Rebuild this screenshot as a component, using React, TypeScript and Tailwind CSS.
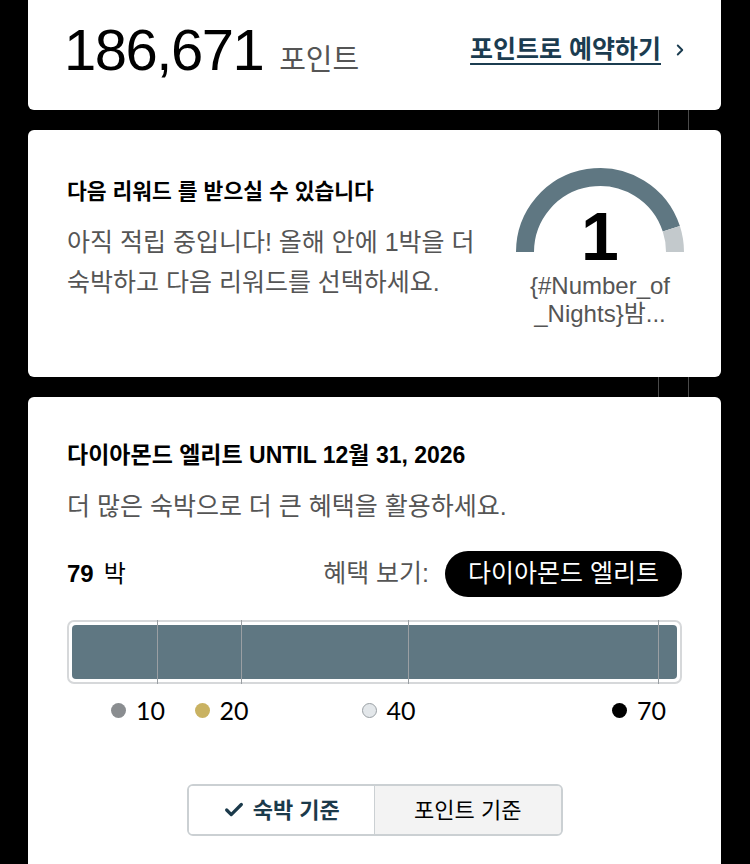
import { Check, ChevronRight } from "lucide-react";

const KR = "font-['Liberation_Sans','Noto_Sans_CJK_KR',sans-serif]";

const TICKS = [
  { value: 10, dot: "bg-[#8a8d90]" },
  { value: 20, dot: "bg-[#c9b262]" },
  { value: 40, dot: "bg-[#e3e7ea] border border-[#9aa0a4]" },
  { value: 70, dot: "bg-black" },
];

// px position of a nights value inside the bar container
const tickX = (v: number) => 6.5 + v * 8.35;

function GapLines() {
  return (
    <div className="flex h-[20px] pl-[630px] gap-[29px]">
      <div className="w-px bg-[#4a4a4a]" />
      <div className="w-px bg-[#4a4a4a]" />
    </div>
  );
}

function PointsCard() {
  return (
    <div className="flex h-[110px] items-center justify-between rounded-b-md bg-white pb-[10px] pl-[36px] pr-[32px]">
      <div className="flex items-baseline gap-[16px]">
        <span className="text-[58px] leading-none tracking-[-1.5px] text-black">
          186,671
        </span>
        <span className="text-[29px] leading-none text-[#555]">포인트</span>
      </div>
      <div className="flex items-center gap-[10px] text-[#1b3c50]">
        <span className="text-[25px] font-semibold underline underline-offset-[5px] decoration-[1.5px]">
          포인트로 예약하기
        </span>
        <ChevronRight className="h-[18px] w-[18px]" strokeWidth={2.5} />
      </div>
    </div>
  );
}

function Gauge() {
  const a = (18 * Math.PI) / 180;
  const ex = 90 + 75 * Math.cos(a);
  const ey = 86 - 75 * Math.sin(a);
  return (
    <div className="flex w-[180px] flex-col items-center pt-[36px]">
      <div className="relative h-[95px] w-[180px]">
        <svg width="180" height="95" viewBox="0 0 180 95">
          <path
            d={`M 15 86 A 75 75 0 0 1 ${ex} ${ey}`}
            fill="none"
            stroke="#5f7782"
            strokeWidth="18"
          />
          <path
            d={`M ${ex} ${ey} A 75 75 0 0 1 165 86`}
            fill="none"
            stroke="#c3c9cc"
            strokeWidth="18"
          />
        </svg>
        <span className="absolute left-0 right-0 top-[36px] text-center text-[68px] font-bold leading-none text-black">
          1
        </span>
      </div>
      <div className="mt-[11px] whitespace-nowrap text-center text-[24px] leading-[28px] text-[#555]">
        {"{#Number_of"}
        <br />
        {"_Nights}밤..."}
      </div>
    </div>
  );
}

function RewardCard() {
  return (
    <div className="flex h-[247px] justify-between rounded-md bg-white pl-[39px] pr-[31px]">
      <div className="pt-[48px]">
        <h2 className="text-[21.5px] font-bold leading-[28px] text-black">
          다음 리워드 를 받으실 수 있습니다
        </h2>
        <p className="mt-[16px] whitespace-nowrap text-[25px] leading-[40px] text-[#555]">
          아직 적립 중입니다! 올해 안에 1박을 더
          <br />
          숙박하고 다음 리워드를 선택하세요.
        </p>
      </div>
      <Gauge />
    </div>
  );
}

function StatusCard() {
  return (
    <div className="rounded-t-md bg-white pb-[40px] pl-[39px] pr-[39px] pt-[44px]">
      <h2 className="text-[23px] font-bold leading-[28px] text-black">
        다이아몬드 엘리트 UNTIL 12월 31, 2026
      </h2>
      <p className="mt-[21px] text-[25px] leading-[32px] text-[#555]">
        더 많은 숙박으로 더 큰 혜택을 활용하세요.
      </p>

      <div className="mt-[29px] flex h-[46px] items-center justify-between">
        <div className="flex items-baseline gap-[10px] text-[24px] text-black">
          <span className="font-bold">79</span>
          <span>박</span>
        </div>
        <div className="flex items-center gap-[16px]">
          <span className="text-[25px] text-[#555]">혜택 보기:</span>
          <span className="flex h-[46px] items-center rounded-full bg-black px-[23px] text-[25px] text-white">
            다이아몬드 엘리트
          </span>
        </div>
      </div>

      <div className="relative mt-[23px] h-[64px] w-[615px] rounded-[7px] border-2 border-[#d6d8da] p-[3px]">
        <div className="h-full w-full rounded-[4px] bg-[#5f7782]" />
        {TICKS.map((t) => (
          <div
            key={t.value}
            className="absolute -bottom-[2px] -top-[2px] w-px bg-[#9a9fa3]"
            style={{ left: tickX(t.value) - 2 }}
          />
        ))}
      </div>

      <div className="relative mt-[11px] h-[30px] font-['Lato',sans-serif]">
        {TICKS.map((t) => (
          <div
            key={t.value}
            className="absolute top-0 flex h-[30px] items-center gap-[10px]"
            style={{ left: tickX(t.value) - 46 }}
          >
            <span className={`h-[15px] w-[15px] rounded-full ${t.dot}`} />
            <span className="text-[25px] leading-none text-black">{t.value}</span>
          </div>
        ))}
      </div>

      <div className="mt-[59px] flex justify-center">
        <div className="flex h-[52px] w-[376px] overflow-hidden rounded-[6px] border-2 border-[#cbd0d3]">
          <div className="flex flex-1 items-center justify-center gap-[8px] bg-white text-[22px] font-semibold text-[#1b3a4b]">
            <Check className="h-[22px] w-[22px]" strokeWidth={3.5} />
            <span>숙박 기준</span>
          </div>
          <div className="flex flex-1 items-center justify-center border-l border-[#cbd0d3] bg-[#f3f3f3] text-[22px] text-black">
            포인트 기준
          </div>
        </div>
      </div>
    </div>
  );
}

export default function App() {
  return (
    <div className={`${KR} min-h-[864px] w-[750px] overflow-hidden bg-black`}>
      <div className="ml-[28px] w-[693px]">
        <PointsCard />
        <GapLines />
        <RewardCard />
        <GapLines />
        <StatusCard />
      </div>
    </div>
  );
}
